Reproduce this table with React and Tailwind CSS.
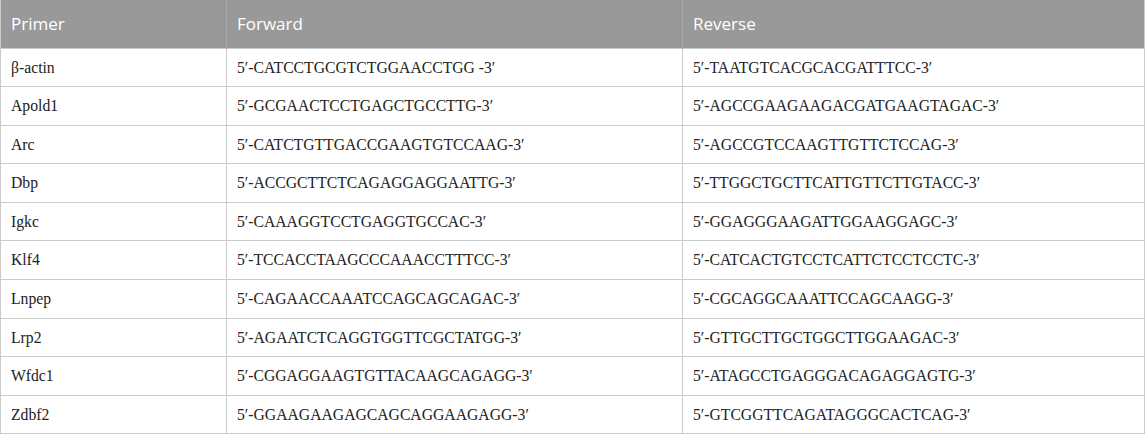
import React from "react";

const rows = [
  ["β-actin", "5′-CATCCTGCGTCTGGAACCTGG -3′", "5′-TAATGTCACGCACGATTTCC-3′"],
  ["Apold1", "5′-GCGAACTCCTGAGCTGCCTTG-3′", "5′-AGCCGAAGAAGACGATGAAGTAGAC-3′"],
  ["Arc", "5′-CATCTGTTGACCGAAGTGTCCAAG-3′", "5′-AGCCGTCCAAGTTGTTCTCCAG-3′"],
  ["Dbp", "5′-ACCGCTTCTCAGAGGAGGAATTG-3′", "5′-TTGGCTGCTTCATTGTTCTTGTACC-3′"],
  ["Igkc", "5′-CAAAGGTCCTGAGGTGCCAC-3′", "5′-GGAGGGAAGATTGGAAGGAGC-3′"],
  ["Klf4", "5′-TCCACCTAAGCCCAAACCTTTCC-3′", "5′-CATCACTGTCCTCATTCTCCTCCTC-3′"],
  ["Lnpep", "5′-CAGAACCAAATCCAGCAGCAGAC-3′", "5′-CGCAGGCAAATTCCAGCAAGG-3′"],
  ["Lrp2", "5′-AGAATCTCAGGTGGTTCGCTATGG-3′", "5′-GTTGCTTGCTGGCTTGGAAGAC-3′"],
  ["Wfdc1", "5′-CGGAGGAAGTGTTACAAGCAGAGG-3′", "5′-ATAGCCTGAGGGACAGAGGAGTG-3′"],
  ["Zdbf2", "5′-GGAAGAAGAGCAGCAGGAAGAGG-3′", "5′-GTCGGTTCAGATAGGGCACTCAG-3′"],
];

export default function App() {
  return (
    <div className="w-[1145px] h-[434px] bg-white overflow-hidden">
      <table className="w-[1145px] table-fixed border-collapse">
        <colgroup>
          <col className="w-[226px]" />
          <col className="w-[456px]" />
          <col />
        </colgroup>
        <thead>
          <tr className="h-[48px] bg-[#999999]">
            {["Primer", "Forward", "Reverse"].map((h, i) => (
              <th
                key={h}
                className={
                  "text-left align-middle font-normal text-white text-[17px] px-[10px] border-[#aaaaaa] " +
                  (i === 0 ? "border-l border-[#cccccc] " : "border-l ") +
                  (i === 2 ? "border-r border-r-[#cccccc]" : "")
                }
                style={{ fontFamily: '"Open Sans", "Noto Sans", sans-serif' }}
              >
                {h}
              </th>
            ))}
          </tr>
        </thead>
        <tbody>
          {rows.map((r) => (
            <tr key={r[0]} className="h-[38.6px]">
              {r.map((c, i) => (
                <td
                  key={i}
                  className="border border-[#cccccc] px-[10px] align-middle text-[15.7px] text-[#222222] whitespace-nowrap"
                  style={{ fontFamily: '"Liberation Serif", "DejaVu Serif", serif' }}
                >
                  {c}
                </td>
              ))}
            </tr>
          ))}
        </tbody>
      </table>
    </div>
  );
}
